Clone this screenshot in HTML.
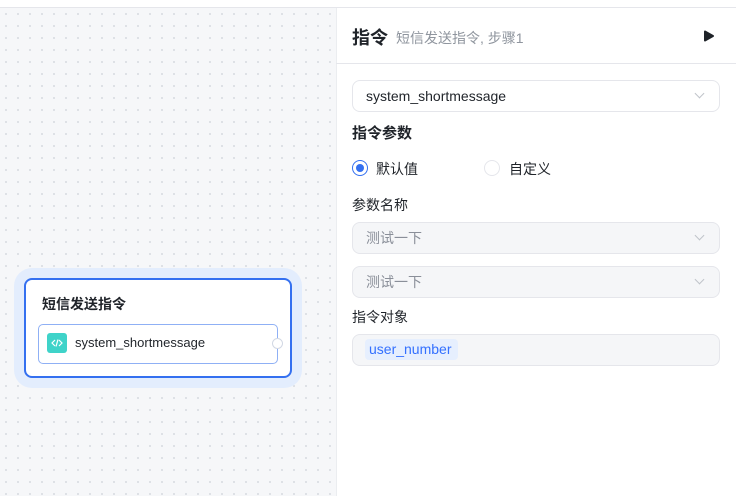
<!DOCTYPE html>
<html><head><meta charset="utf-8"><style>
*{margin:0;padding:0;box-sizing:border-box}
body{width:736px;height:496px;overflow:hidden;font-family:"Liberation Sans","Noto Sans CJK SC",sans-serif;background:#fff;position:relative;color:#1f2329}
.topline{position:absolute;left:0;top:7px;width:736px;height:1px;background:#e5e6eb}
.canvas{position:absolute;left:0;top:8px;width:336px;height:488px;background-color:#f6f7f9;background-image:radial-gradient(#dcdfe4 1px,transparent 1.2px);background-size:12px 12px}
.panel{position:absolute;left:336px;top:8px;width:400px;height:488px;background:#fff;border-left:1px solid #ebedf0}
.abs{position:absolute}
.halo{left:14px;top:268px;width:288px;height:120px;background:#e3edfd;border-radius:18px}
.card{left:24px;top:278px;width:268px;height:100px;background:#fff;border:2px solid #3470f0;border-radius:8px}
.inner{left:38px;top:324px;width:240px;height:40px;border:1px solid #8fb0f5;border-radius:5px;background:#fff}
.sel{left:352px;width:368px;height:32px;border:1px solid #e5e6eb;border-radius:8px;font-size:14px;padding-left:13px;line-height:30px}
.gray{background:#f5f6f8;color:#8a8f99}
.chev{position:absolute;right:16px;top:9px;width:7px;height:7px;border-right:1px solid #c0c4ca;border-bottom:1px solid #c0c4ca;transform:rotate(45deg)}
.lbl{font-size:14px;color:#1f2329;left:352px}
</style></head><body>
<div class="canvas"></div>
<div class="panel"></div>
<div class="topline"></div>
<div class="abs" style="left:336px;top:63px;width:400px;height:1px;background:#e5e6eb"></div>

<div class="abs halo"></div>
<div class="abs card"></div>
<div class="abs" style="left:42px;top:294px;font-size:14px;font-weight:bold">短信发送指令</div>
<div class="abs inner"></div>
<div class="abs" style="left:47px;top:333px;width:20px;height:20px;background:#3fd3c9;border-radius:3px"></div>
<svg class="abs" style="left:47px;top:333px" width="20" height="20"><path d="M8 7 L5 10 L8 13 M12 7 L15 10 L12 13 M11 6.5 L9 13.5" stroke="#fff" stroke-width="1.2" fill="none"/></svg>
<div class="abs" style="left:75px;top:335px;font-size:13px">system_shortmessage</div>
<div class="abs" style="left:272px;top:338px;width:11px;height:11px;border:1.5px solid #d2d8e4;border-radius:50%;background:#fff"></div>

<div class="abs" style="left:352px;top:24px;font-size:18px;font-weight:bold">指令</div>
<div class="abs" style="left:396px;top:28px;font-size:14px;color:#8f959e">短信发送指令, 步骤1</div>
<svg class="abs" style="left:703px;top:30px" width="12" height="12"><path d="M2 1.5 L10 6 L2 10.5 Z" fill="#1f2329" stroke="#1f2329" stroke-width="2" stroke-linejoin="round"/></svg>

<div class="abs sel" style="top:80px">system_shortmessage<div class="chev"></div></div>
<div class="abs" style="left:352px;top:122px;font-size:15px;font-weight:bold">指令参数</div>
<div class="abs" style="left:352px;top:160px;width:16px;height:16px;border:1px solid #3470f0;border-radius:50%"></div>
<div class="abs" style="left:356px;top:164px;width:8px;height:8px;background:#3470f0;border-radius:50%"></div>
<div class="abs lbl" style="left:376px;top:159px">默认值</div>
<div class="abs" style="left:484px;top:160px;width:16px;height:16px;border:1px solid #e5e6eb;border-radius:50%"></div>
<div class="abs lbl" style="left:509px;top:159px">自定义</div>
<div class="abs lbl" style="top:195px">参数名称</div>
<div class="abs sel gray" style="top:222px">测试一下<div class="chev"></div></div>
<div class="abs sel gray" style="top:266px">测试一下<div class="chev"></div></div>
<div class="abs lbl" style="top:307px">指令对象</div>
<div class="abs sel gray" style="top:334px"></div>
<div class="abs" style="left:365px;top:339px;width:93px;height:21px;background:#e6effe;border-radius:4px;color:#3370ff;font-size:14px;line-height:21px;padding-left:4px">user_number</div>
</body></html>
